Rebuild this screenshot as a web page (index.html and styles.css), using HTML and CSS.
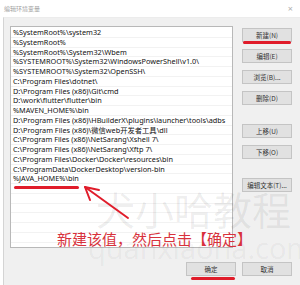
FILE: index.html
```html
<!DOCTYPE html>
<html>
<head>
    <meta charset="utf-8">
    <title>编辑环境变量</title>
    <link rel="stylesheet" href="styles.css">
</head>
<body>
    <div class="dialog">
        <div class="titlebar">
            <span class="title">编辑环境变量</span>
            <span class="close">×</span>
        </div>
        <div class="content">
            <div class="main">
                <ul class="paths">
                    <li>%SystemRoot%\system32</li>
                    <li>%SystemRoot%</li>
                    <li>%SystemRoot%\System32\Wbem</li>
                    <li>%SYSTEMROOT%\System32\WindowsPowerShell\v1.0\</li>
                    <li>%SYSTEMROOT%\System32\OpenSSH\</li>
                    <li>C:\Program Files\dotnet\</li>
                    <li>D:\Program Files (x86)\Git\cmd</li>
                    <li>D:\work\flutter\flutter\bin</li>
                    <li>%MAVEN_HOME%\bin</li>
                    <li>D:\Program Files (x86)\HBuilderX\plugins\launcher\tools\adbs</li>
                    <li>D:\Program Files (x86)\微信web开发者工具\dll</li>
                    <li>C:\Program Files (x86)\NetSarang\Xshell 7\</li>
                    <li>C:\Program Files (x86)\NetSarang\Xftp 7\</li>
                    <li>C:\Program Files\Docker\Docker\resources\bin</li>
                    <li>C:\ProgramData\DockerDesktop\version-bin</li>
                    <li>%JAVA_HOME%\bin</li>
                    <li></li>
                    <li></li>
                    <li></li>
                    <li></li>
                    <li></li>
                    <li></li>
                </ul>
                <div class="actions">
                    <button class="btn">新建(N)</button>
                    <button class="btn">编辑(E)</button>
                    <button class="btn">浏览(B)...</button>
                    <button class="btn">删除(D)</button>
                    <button class="btn gap">上移(U)</button>
                    <button class="btn">下移(O)</button>
                    <button class="btn gap">编辑文本(T)...</button>
                </div>
            </div>
            <div class="footer">
                <button class="btn">确定</button>
                <button class="btn">取消</button>
            </div>
        </div>

        <!-- 标注 -->
        <div class="watermark">
            <span class="wm-cn">犬小哈教程</span>
            <span class="wm-en">quanxiaoha.com</span>
        </div>
        <span class="mark mark-new"></span>
        <span class="mark mark-java"></span>
        <span class="mark mark-ok"></span>
        <svg class="arrow" width="300" height="285" viewBox="0 0 300 285">
            <path d="M128 218 L85 187" />
            <path d="M85 187 L99 190 M85 187 L90 200" />
        </svg>
        <p class="note">新建该值，然后点击【确定】</p>
    </div>
</body>
</html>
```

FILE: styles.css
```css
* {
    box-sizing: border-box;
}

body {
    margin: 0;
    background-color: #ffffff;
}

.dialog {
    position: relative;
    width: 300px;
    height: 285px;
    overflow: hidden;
    font-family: 'Noto Sans', 'Noto Sans CJK SC', sans-serif;
}

.titlebar {
    height: 17px;
    display: flex;
    align-items: center;
    justify-content: space-between;
    padding: 0 7px 0 4px;
    background-color: #ffffff;
}

.title {
    font-size: 6px;
    color: #a0a0a0;
}

.close {
    font-size: 9px;
    color: #b0b0b0;
}

.content {
    margin-left: 3px;
    height: 268px;
    border-left: 1px solid #d4d4d4;
    border-top: 1px solid #ececec;
    background-color: #f0f0f0;
    padding: 8px 8px 0 6px;
}

.main {
    display: flex;
    gap: 9px;
}

.paths {
    list-style: none;
    margin: 0;
    padding: 1px 0 0 0;
    width: 223px;
    height: 222px;
    overflow: hidden;
    background-color: #ffffff;
    border: 1px solid #b8b8b8;
}

.paths li {
    height: 9.75px;
    line-height: 9px;
    padding-left: 2px;
    font-size: 7.3px;
    color: #111111;
    white-space: nowrap;
    border-bottom: 1px solid #f2f2f2;
}

.actions {
    display: flex;
    flex-direction: column;
    gap: 7px;
    padding-top: 2px;
}

.btn {
    width: 50px;
    height: 14px;
    padding: 0;
    font-family: 'Noto Sans CJK SC', sans-serif;
    font-size: 6.5px;
    color: #333333;
    background-color: #e1e1e1;
    border: 1px solid #c4c4c4;
}

.actions .gap {
    margin-top: 12px;
}

.footer {
    display: flex;
    justify-content: flex-end;
    gap: 6px;
    margin-top: 14px;
}

.watermark {
    position: absolute;
    left: 96px;
    top: 183px;
    display: flex;
    flex-direction: column;
    color: rgba(0, 0, 0, 0.07);
    pointer-events: none;
}

.wm-cn {
    font-family: 'Noto Sans CJK SC', sans-serif;
    font-size: 39px;
    line-height: 50px;
}

.wm-en {
    margin-left: -8px;
    font-family: 'Open Sans', sans-serif;
    font-size: 29px;
    line-height: 30px;
    color: rgba(0, 0, 0, 0.05);
}

.mark {
    position: absolute;
    height: 3px;
    border-radius: 2px;
    background-color: #e01c2a;
}

.mark-new {
    left: 243px;
    top: 41px;
    width: 48px;
}

.mark-java {
    left: 14px;
    top: 186px;
    width: 65px;
}

.mark-ok {
    left: 191px;
    top: 277px;
    width: 44px;
}

.arrow {
    position: absolute;
    left: 0;
    top: 0;
    fill: none;
    stroke: #e01c2a;
    stroke-width: 2;
    stroke-linecap: round;
}

.note {
    position: absolute;
    left: 57px;
    top: 229px;
    margin: 0;
    font-family: 'Noto Sans CJK SC', sans-serif;
    font-size: 15px;
    line-height: 20px;
    color: #d8323c;
}
```
